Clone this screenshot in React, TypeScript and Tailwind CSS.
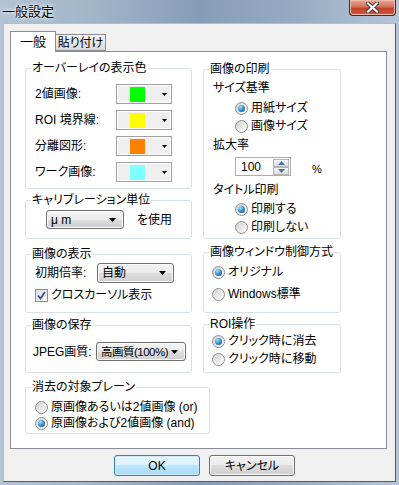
import React from "react";

const font = "font-['Liberation_Sans','Noto_Sans_CJK_JP',sans-serif] [font-feature-settings:'palt']";

const Arrow = () => (
  <svg width="7" height="4" viewBox="0 0 7 4" className="shrink-0">
    <polygon points="0,0 7,0 3.5,4" fill="#000" />
  </svg>
);

const Group = ({ label, className, children }: { label: string; className: string; children?: React.ReactNode }) => (
  <div className={`relative border border-[#d5dfe5] rounded-[3px] ${className}`}>
    <span className="absolute -top-[8px] left-[5px] bg-white px-[1px] leading-[14px] whitespace-nowrap">{label}</span>
    {children}
  </div>
);

const Radio = ({ checked }: { checked?: boolean }) => (
  <span className="w-[13px] h-[13px] rounded-full border border-[#8f8f8f] bg-[linear-gradient(135deg,#cfcfcf,#f6f6f6_70%,#ffffff)] flex items-center justify-center shrink-0">
    {checked ? (
      <span className="w-[7px] h-[7px] rounded-full bg-[radial-gradient(circle_at_35%_30%,#a6e1ff,#2c84c9_55%,#0f3a66)]" />
    ) : (
      <span className="w-[7px] h-[7px] rounded-full bg-[linear-gradient(135deg,#d9d9d9,#f3f3f3)]" />
    )}
  </span>
);

const RadioRow = ({ checked, label, className = "" }: { checked?: boolean; label: string; className?: string }) => (
  <div className={`flex items-center gap-[3px] h-[13px] leading-[13px] whitespace-nowrap ${className}`}>
    <Radio checked={checked} />
    <span>{label}</span>
  </div>
);

const Combo = ({ text, className }: { text: string; className: string }) => (
  <div className={`flex items-center justify-between rounded-[3px] border border-[#707070] bg-[linear-gradient(#f3f3f3_0%,#ebebeb_50%,#dddddd_50%,#cfcfcf_100%)] shadow-[inset_0_0_0_1px_#fbfbfb] pl-[4px] pr-[7px] leading-[14px] ${className}`}>
    <span className="whitespace-nowrap">{text}</span>
    <Arrow />
  </div>
);

const ColorCombo = ({ color }: { color: string }) => (
  <div className="w-[56px] h-[20px] border border-[#a0a0a0] bg-[#efefef] shadow-[inset_0_0_0_1px_#ffffff] flex items-center pl-[13px] pr-[4px] justify-between">
    <span className="w-[15px] h-[15px]" style={{ backgroundColor: color }} />
    <svg width="5" height="3" viewBox="0 0 5 3">
      <polygon points="0,0 5,0 2.5,3" fill="#000" />
    </svg>
  </div>
);

const ColorRow = ({ label, color }: { label: string; color: string }) => (
  <div className="flex items-center h-[20px]">
    <span className="w-[81px] whitespace-nowrap leading-[14px]">{label}</span>
    <ColorCombo color={color} />
  </div>
);

const SpinArrow = ({ up }: { up?: boolean }) => (
  <div className="h-[8px] w-[16px] border border-[#b5b5b5] bg-[linear-gradient(#f6f6f6,#dcdcdc)] flex items-center justify-center">
    <svg width="7" height="4" viewBox="0 0 7 4">
      <polygon points={up ? "0,4 7,4 3.5,0" : "0,0 7,0 3.5,4"} fill="#4b73a8" />
    </svg>
  </div>
);

const Button = ({ label, primary }: { label: string; primary?: boolean }) => (
  <div
    className={`w-[86px] h-[21px] rounded-[3px] border flex items-center justify-center leading-[14px] ${
      primary
        ? "border-[#3c7fb1] bg-[linear-gradient(#eaf6fd_0%,#d9f0fc_50%,#bee6fd_50%,#a7d9f5_100%)] shadow-[inset_0_0_0_1px_#cdeafc]"
        : "border-[#707070] bg-[linear-gradient(#f2f2f2_0%,#ebebeb_50%,#dddddd_50%,#cfcfcf_100%)] shadow-[inset_0_0_0_1px_#fbfbfb]"
    }`}
  >
    {label}
  </div>
);

export default function App() {
  return (
    <div className={`w-[399px] h-[485px] flex flex-col overflow-hidden bg-[linear-gradient(90deg,#b3c3d4_0%,#a0b4c9_25%,#869db7_50%,#97acc3_75%,#b6c6d6_100%)] text-[12px] text-black ${font}`}>
      <div className="h-[23px] shrink-0 flex justify-between items-start">
        <span className="pl-[2px] pt-[4px] text-[13px] leading-[16px] [text-shadow:0_0_5px_#ffffff,0_0_3px_#ffffff]">一般設定</span>
        <div className="mr-[3px] w-[47px] h-[16px] rounded-b-[4px] border border-t-0 border-[#5b2118] bg-[linear-gradient(#e8a593_0%,#d4735c_45%,#c2412a_55%,#d15a3c_100%)] shadow-[inset_0_0_0_1px_#f0b8a8] flex items-center justify-center">
          <svg width="13" height="11" viewBox="0 0 13 11">
            <path d="M2 1.5 L11 9.5 M11 1.5 L2 9.5" stroke="#3a3a3a" strokeWidth="4" strokeLinecap="square" />
            <path d="M2 1.5 L11 9.5 M11 1.5 L2 9.5" stroke="#ffffff" strokeWidth="2.2" strokeLinecap="square" />
          </svg>
        </div>
      </div>

      <div className="mx-[3px] h-[459px] shrink-0 bg-[#f0f0f0] border border-[#aebfd2] border-r-[#4d5d70] border-b-[#4d5d70] flex flex-col pt-[7px] pl-[6px]">
        {/* tabs */}
        <div className="flex items-end h-[20px]">
          <div className="relative z-10 h-[21px] -mb-px w-[46px] bg-white border border-b-0 border-[#898c95] flex items-center justify-center leading-[14px] text-[13px]">一般</div>
          <div className="-ml-px h-[17px] w-[51px] border border-[#898c95] bg-[linear-gradient(#f3f3f3,#d9d9d9)] flex items-center justify-center leading-[14px]">貼り付け</div>
        </div>

        {/* panel */}
        <div className="w-[377px] h-[398px] bg-white border border-[#898c95] pl-[14px]">
          <div className="flex gap-[11px] items-start">
            {/* left column */}
            <div className="w-[167px] mt-[16px] flex flex-col">
              <Group label="オーバーレイの表示色" className="h-[121px] pt-[15px] pl-[9px]">
                <div className="flex flex-col gap-[6px]">
                  <ColorRow label="2値画像:" color="#00ff00" />
                  <ColorRow label="ROI 境界線:" color="#ffff00" />
                  <ColorRow label="分離図形:" color="#ff8000" />
                  <ColorRow label="ワーク画像:" color="#80ffff" />
                </div>
              </Group>

              <Group label="キャリブレーション単位" className="mt-[11px] h-[39px] pt-[9px] pl-[20px]">
                <div className="flex items-center">
                  <Combo text="μ m" className="w-[78px] h-[19px]" />
                  <span className="ml-[13px] leading-[14px]">を使用</span>
                </div>
              </Group>

              <Group label="画像の表示" className="mt-[15px] h-[59px] pt-[8px] pl-[9px]">
                <div className="flex items-center">
                  <span className="w-[62px] leading-[14px] whitespace-nowrap">初期倍率:</span>
                  <Combo text="自動" className="w-[77px] h-[20px]" />
                </div>
                <div className="mt-[6px] flex items-center gap-[3px] h-[13px] leading-[13px]">
                  <span className="w-[13px] h-[13px] border border-[#8f8f8f] bg-[linear-gradient(135deg,#dcdcdc,#fafafa)] flex items-center justify-center shrink-0">
                    <svg width="9" height="9" viewBox="0 0 9 9">
                      <path d="M1 4.5 L3.5 7.5 L8 1" stroke="#31508f" strokeWidth="1.8" fill="none" />
                    </svg>
                  </span>
                  <span className="whitespace-nowrap">クロスカーソル表示</span>
                </div>
              </Group>

              <Group label="画像の保存" className="mt-[12px] h-[48px] pt-[16px] pl-[7px]">
                <div className="flex items-center">
                  <span className="w-[63px] leading-[14px] whitespace-nowrap">JPEG画質:</span>
                  <Combo text="高画質(100%)" className="w-[90px] h-[19px] pl-[3px] pr-[5px] text-[11.5px] tracking-[-0.5px]" />
                </div>
              </Group>
            </div>

            {/* right column */}
            <div className="w-[138px] mt-[17px] flex flex-col">
              <Group label="画像の印刷" className="h-[170px] pt-[11px] pl-[9px]">
                <div className="leading-[14px]">サイズ基準</div>
                <RadioRow checked label="用紙サイズ" className="mt-[7px] ml-[22px]" />
                <RadioRow label="画像サイズ" className="mt-[5px] ml-[22px]" />
                <div className="mt-[5px] leading-[14px]">拡大率</div>
                <div className="mt-[5px] ml-[22px] flex items-end">
                  <div className="w-[56px] h-[19px] border border-[#abadb3] bg-white flex items-center justify-between pl-[5px] pr-[1px]">
                    <span className="leading-[14px]">100</span>
                    <div className="flex flex-col">
                      <SpinArrow up />
                      <SpinArrow />
                    </div>
                  </div>
                  <span className="ml-[21px] leading-[14px] text-[11px]">%</span>
                </div>
                <div className="mt-[7px] leading-[14px]">タイトル印刷</div>
                <RadioRow checked label="印刷する" className="mt-[6px] ml-[22px]" />
                <RadioRow label="印刷しない" className="mt-[5px] ml-[22px]" />
              </Group>

              <Group label="画像ウィンドウ制御方式" className="mt-[13px] h-[61px] pt-[13px] pl-[8px]">
                <RadioRow checked label="オリジナル" />
                <RadioRow label="Windows標準" className="mt-[9px]" />
              </Group>

              <Group label="ROI操作" className="mt-[11px] h-[49px] pt-[10px] pl-[8px]">
                <RadioRow checked label="クリック時に消去" />
                <RadioRow label="クリック時に移動" className="mt-[5px]" />
              </Group>
            </div>
          </div>

          <Group label="消去の対象プレーン" className="mt-[14px] w-[185px] h-[47px] pt-[13px] pl-[9px]">
            <RadioRow label="原画像あるいは2値画像 (or)" />
            <RadioRow checked label="原画像および2値画像 (and)" className="mt-[3px]" />
          </Group>
        </div>

        {/* buttons */}
        <div className="mt-[6px] pl-[104px] flex gap-[9px]">
          <Button primary label="OK" />
          <Button label="キャンセル" />
        </div>
      </div>
    </div>
  );
}
